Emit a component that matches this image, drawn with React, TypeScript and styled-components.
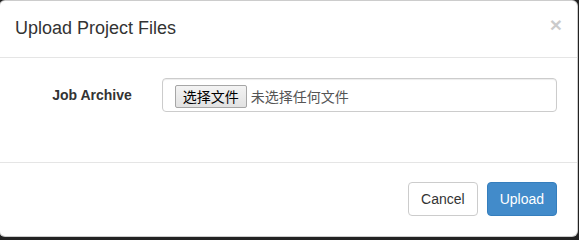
import React from 'react';
import styled, { createGlobalStyle } from 'styled-components';

const GlobalStyle = createGlobalStyle`
  html, body {
    margin: 0;
    background: #222;
    font-family: "Liberation Sans", Arial, "Noto Sans CJK SC", sans-serif;
    font-size: 14px;
    line-height: 1.428571429;
    color: #333;
  }
  * {
    box-sizing: border-box;
  }
`;

const App = (): JSX.Element => {
  return (
    <>
      <GlobalStyle />
      <Modal>
        <Header>
          <Title>Upload Project Files</Title>
          <Close type="button" aria-label="Close">×</Close>
        </Header>
        <Body>
          <FormRow>
            <Label>Job Archive</Label>
            <FileField>
              <FileButton>选择文件</FileButton>
              <FileName>未选择任何文件</FileName>
            </FileField>
          </FormRow>
        </Body>
        <Footer>
          <Button>Cancel</Button>
          <Button primary>Upload</Button>
        </Footer>
      </Modal>
    </>
  );
};

const Modal = styled.div`
  width: 579px;
  margin-left: -1px;
  background: #fff;
  border: 1px solid rgba(0, 0, 0, 0.2);
  border-radius: 6px;
  overflow: hidden;
`;

const Header = styled.div`
  display: flex;
  justify-content: space-between;
  align-items: flex-start;
  padding: 15px;
  border-bottom: 1px solid #e5e5e5;
`;

const Title = styled.h4`
  margin: 0;
  font-size: 18px;
  font-weight: 500;
  line-height: 1.428571429;
  color: #333;
`;

const Close = styled.button`
  margin-top: -2px;
  padding: 0;
  border: 0;
  background: transparent;
  font-family: "Liberation Sans", Arial, sans-serif;
  font-size: 21px;
  font-weight: bold;
  line-height: 1;
  color: #000;
  opacity: 0.2;
  text-shadow: 0 1px 0 #fff;
  cursor: pointer;
`;

const Body = styled.div`
  padding: 20px;
`;

const FormRow = styled.div`
  display: grid;
  grid-template-columns: 111.75px 1fr;
  column-gap: 30px;
  margin-bottom: 15px;
`;

const Label = styled.label`
  padding-top: 7px;
  text-align: right;
  font-weight: bold;
  color: #333;
`;

const FileField = styled.div`
  display: flex;
  align-items: flex-start;
  height: 34px;
  padding: 6px 12px;
  border: 1px solid #ccc;
  border-radius: 4px;
  box-shadow: inset 0 1px 1px rgba(0, 0, 0, 0.075);
  color: #555;
  font-family: "Noto Sans CJK SC", sans-serif;
  font-size: 14px;
`;

const FileButton = styled.span`
  display: inline-flex;
  align-items: center;
  height: 23px;
  padding: 0 7px;
  border: 1px solid #a6a6a6;
  border-radius: 2px;
  background: linear-gradient(#f3f3f3, #e2e2e2);
  color: #000;
  line-height: 1;
`;

const FileName = styled.span`
  margin-left: 4px;
  height: 23px;
  display: inline-flex;
  align-items: center;
  line-height: 1;
  color: #555;
`;

const Footer = styled.div`
  display: flex;
  justify-content: flex-end;
  gap: 9px;
  margin-top: 15px;
  padding: 19px 20px 20px;
  border-top: 1px solid #e5e5e5;
`;

const Button = styled.button<{ primary?: boolean }>`
  padding: 6px 12px;
  font-family: "Liberation Sans", Arial, sans-serif;
  font-size: 14px;
  line-height: 1.428571429;
  border-radius: 4px;
  border: 1px solid ${(p) => (p.primary ? '#357ebd' : '#ccc')};
  background: ${(p) => (p.primary ? '#428bca' : '#fff')};
  color: ${(p) => (p.primary ? '#fff' : '#333')};
  cursor: pointer;
`;

export default App;
